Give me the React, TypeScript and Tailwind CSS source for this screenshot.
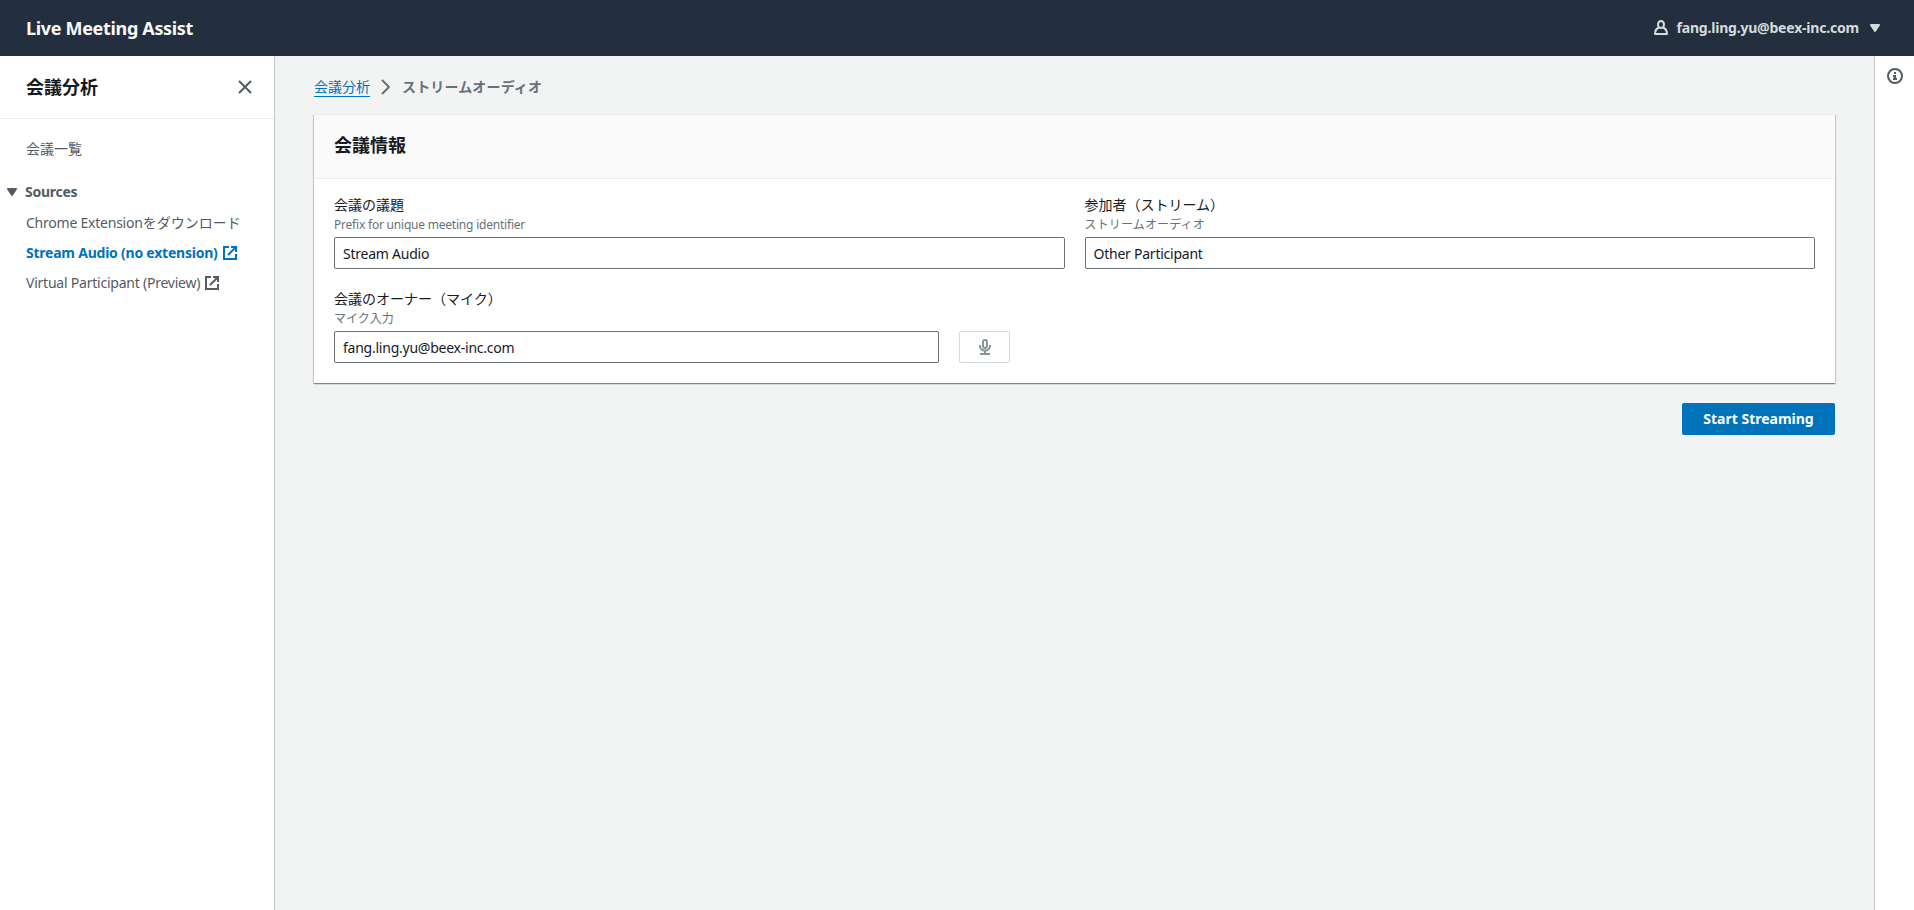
import type { ReactNode } from 'react';

function Icon({ children, className = '' }: { children: ReactNode; className?: string }) {
  return (
    <svg
      viewBox="0 0 16 16"
      width="16"
      height="16"
      fill="none"
      stroke="currentColor"
      strokeWidth="2"
      strokeLinejoin="round"
      className={'block shrink-0 overflow-visible ' + className}
    >
      {children}
    </svg>
  );
}

function ExternalIcon() {
  return (
    <Icon>
      <path d="M10 2h4v4" strokeLinejoin="miter" strokeLinecap="square" />
      <path d="m6 10 8-8" />
      <path d="M14 9.05V14H2V2h5" strokeLinejoin="miter" />
    </Icon>
  );
}

function CaretIcon() {
  return (
    <Icon>
      <path d="M4 5h8l-4 6-4-6z" fill="currentColor" />
    </Icon>
  );
}

function Header() {
  return (
    <header className="flex h-14 shrink-0 items-center justify-between bg-[#232f3e] pl-[26px] pr-[31px]">
      <span className="text-lg font-bold tracking-[-0.33px] text-[#fafafa]">Live Meeting Assist</span>
      <button className="flex items-center text-sm font-bold tracking-[-0.2px] text-[#d5dbdb]">
        <Icon className="mr-[7px]">
          <ellipse cx="8" cy="4.500" rx="3" ry="3.500" />
          <path d="M5.800 7.500C3.400 8.600 2 11 2 14h12c0-3-1.400-5.400-3.800-6.500" />
        </Icon>
        fang.ling.yu@beex-inc.com
        <span className="ml-2">
          <CaretIcon />
        </span>
      </button>
    </header>
  );
}

function Sidebar() {
  return (
    <nav className="flex w-[275px] shrink-0 flex-col border-r border-[#c5cccd] bg-white text-[#545b64]">
      <div className="flex h-[63px] items-center justify-between border-b border-[#eaeded] pl-[26px] pr-[21px]">
        <h2 className="text-lg font-bold text-[#16191f]">会議分析</h2>
        <Icon>
          <path d="m2 2 12 12M14 2 2 14" />
        </Icon>
      </div>
      <div className="flex flex-col text-sm leading-[22px]">
        <a className="mt-[19px] pl-[26px]">会議一覧</a>
        <div className="mt-[21px] flex items-center gap-[5px] pl-1 font-bold tracking-[-0.25px]">
          <CaretIcon />
          Sources
        </div>
        <ul className="mt-[9px] flex flex-col gap-2 pl-[26px] tracking-[-0.23px]">
          <li>
            Chrome Extension<span className="tracking-normal">をダウンロード</span>
          </li>
          <li className="flex items-center gap-1 font-bold text-[#0073bb]">
            Stream Audio (no extension)
            <ExternalIcon />
          </li>
          <li className="flex items-center gap-1">
            Virtual Participant (Preview)
            <ExternalIcon />
          </li>
        </ul>
      </div>
    </nav>
  );
}

type FieldProps = { label: string; hint: string; hintClass?: string; value: string; children?: ReactNode };

function Field({ label, hint, hintClass = '', value, children }: FieldProps) {
  return (
    <div className="min-w-0">
      <div className="-mt-px mb-px text-sm leading-[22px] text-[#16191f]">{label}</div>
      <div className={'text-xs leading-4 text-[#687078] ' + hintClass}>{hint}</div>
      <div className="mt-1 flex gap-5">
        <input
          defaultValue={value}
          className="h-8 min-w-0 flex-1 rounded-[2px] border border-[#687078] bg-white px-2 text-sm tracking-[-0.24px] text-[#16191f] outline-none"
        />
        {children}
      </div>
    </div>
  );
}

function MeetingCard() {
  return (
    <section className="bg-white shadow-[0_1px_1px_0_rgba(0,28,36,0.3),1px_1px_1px_0_rgba(0,28,36,0.15),-1px_1px_1px_0_rgba(0,28,36,0.15)]">
      <div className="flex h-[65px] items-center border-b border-t border-[#eaeded] bg-[#fafafa] px-5 pb-[3px]">
        <h2 className="text-lg font-bold text-[#16191f]">会議情報</h2>
      </div>
      <div className="grid grid-cols-2 gap-x-5 gap-y-5 px-5 pb-5 pt-4">
        <Field
          label="会議の議題"
          hint="Prefix for unique meeting identifier"
          hintClass="tracking-[-0.21px]"
          value="Stream Audio"
        />
        <Field
          label="参加者（ストリーム）"
          hint="ストリームオーディオ"
          hintClass="tracking-[0.15px]"
          value="Other Participant"
        />
        <Field label="会議のオーナー（マイク）" hint="マイク入力" value="fang.ling.yu@beex-inc.com">
          <div className="flex w-[105.5px] shrink-0">
            <button className="flex h-8 w-[51px] items-center justify-center rounded-[2px] border border-[#d5dbdb] bg-white pl-px text-[#879596]">
              <Icon>
                <path d="M8 1a2 2 0 0 0-2 2v4a2 2 0 1 0 4 0V3a2 2 0 0 0-2-2z" />
                <path d="M13 6v1c0 2.500-2 4.500-5 4.500S3 9.500 3 7V6M8 11.500V15M3 15h10" />
              </Icon>
            </button>
          </div>
        </Field>
      </div>
    </section>
  );
}

export default function App() {
  return (
    <div className="flex h-screen flex-col overflow-hidden bg-[#f2f3f3] font-['Noto_Sans','Noto_Sans_CJK_JP',sans-serif]">
      <Header />
      <div className="flex min-h-0 flex-1">
        <Sidebar />
        <main className="flex min-w-0 flex-1 flex-col px-[39px] pt-5">
          <div className="flex h-[22px] items-start text-sm leading-[18px]">
            <a className="border-b border-[#0073bb] pt-0.5 text-[#0073bb]">会議分析</a>
            <Icon className="mx-2 mt-[3px] text-[#687078]">
              <path d="m4 1 7 7-7 7" />
            </Icon>
            <span className="pt-0.5 font-bold tracking-[0.15px] text-[#687078]">ストリームオーディオ</span>
          </div>
          <div className="mt-4">
            <MeetingCard />
          </div>
          <button className="mt-5 h-8 w-[153px] self-end rounded-[2px] bg-[#0073bb] text-sm font-bold text-white">
            Start Streaming
          </button>
        </main>
        <aside className="w-10 shrink-0 border-l border-[#c5cccd] bg-white pl-3 pt-3 text-[#545b64]">
          <Icon>
            <circle cx="8" cy="8" r="7" />
            <path d="M8 11V8H6M10 11H6M8 6V4" strokeLinejoin="miter" />
          </Icon>
        </aside>
      </div>
    </div>
  );
}
